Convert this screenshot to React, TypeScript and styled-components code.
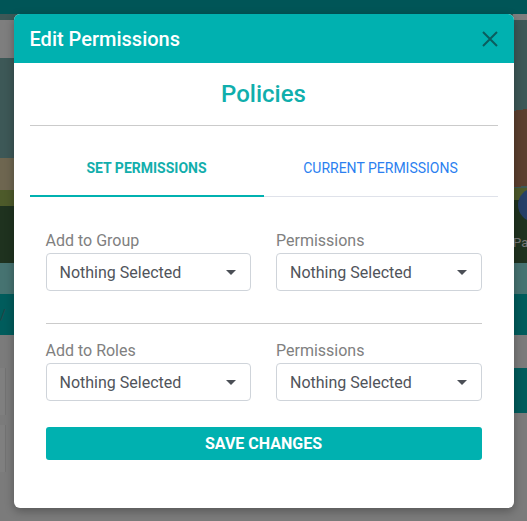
import React, { useState } from 'react'
import styled, { createGlobalStyle } from 'styled-components'

const GlobalStyle = createGlobalStyle`
  html, body, #root {
    margin: 0;
    height: 100%;
  }
  body {
    font-family: Roboto, "Liberation Sans", Arial, sans-serif;
    overflow: hidden;
  }
  * {
    box-sizing: border-box;
  }
`

const teal = '#00b1b0'

// the page that sits behind the dialog
const Page = styled.div`
  position: relative;
  width: 100%;
  height: 100vh;
  overflow: hidden;
  display: flex;
  flex-direction: column;
  background: #f6f6f6;
`

const NavBar = styled.div`
  height: 14px;
  flex: none;
  background: #00aaae;
`

const Hero = styled.div`
  height: 249px;
  flex: none;
  display: grid;
  grid-template-columns: 513px 1fr;
`

const HeroLeft = styled.div`
  background: linear-gradient(
    to bottom,
    #7ab0ae 0 6px,
    #fcfcfc 6px 44px,
    #7ab0ae 44px 144px,
    #dccca0 144px 176px,
    #9ab454 176px 192px,
    #3e643e 192px 249px
  );
`

const HeroRight = styled.div`
  display: flex;
  flex-direction: column;
  padding-top: 174px;
  overflow: hidden;
  white-space: nowrap;
  background:
    linear-gradient(172deg, transparent 0 96px, #b87e5e 96px 172px, transparent 172px),
    linear-gradient(
      to bottom,
      #fcfcfc 0 6px,
      #7ab0ae 6px 174px,
      #9ab454 174px 186px,
      #3e643e 186px 249px
    );
`

const Avatar = styled.div`
  width: 34px;
  height: 34px;
  margin-left: 5px;
  border-radius: 50%;
  background: #4a7fd0;
`

const HeroCaption = styled.span`
  margin-top: 13px;
  font-size: 13px;
  color: #f0f0f0;
`

const Band = styled.div<{ $h: number; $bg: string }>`
  height: ${(p) => p.$h}px;
  flex: none;
  background: ${(p) => p.$bg};
  display: flex;
  align-items: center;
  font-size: 14px;
  color: #4a8a8a;
`

const Content = styled.div`
  flex: 1;
  display: flex;
  justify-content: space-between;
  padding-top: 33px;
`

const CardStack = styled.div`
  display: flex;
  flex-direction: column;
  gap: 10px;
`

const Card = styled.div`
  width: 6px;
  height: 47px;
  background: #ffffff;
  border-right: 1px solid #e4e4e4;
`

const SideButton = styled.div`
  width: 13px;
  height: 45px;
  background: #00b8b8;
`

// dialog
const Backdrop = styled.div`
  position: absolute;
  inset: 0;
  background: rgba(0, 0, 0, 0.5);
  display: flex;
  justify-content: center;
  align-items: flex-start;
  padding-top: 14px;
`

const Modal = styled.div`
  width: 500px;
  background: #fff;
  border-radius: 6px;
  overflow: hidden;
  box-shadow: 0 3px 10px rgba(0, 0, 0, 0.3);
`

const ModalHeader = styled.div`
  height: 49px;
  background: ${teal};
  display: flex;
  align-items: center;
  justify-content: space-between;
  padding: 0 16px;
`

const ModalTitle = styled.h2`
  margin: 0;
  font-size: 20px;
  font-weight: 500;
  color: #fff;
`

const CloseButton = styled.button`
  border: 0;
  padding: 0;
  background: none;
  width: 16px;
  height: 16px;
  display: flex;
  cursor: pointer;
`

const ModalBody = styled.div`
  padding: 0 16px;
`

const Heading = styled.div`
  height: 63px;
  display: flex;
  align-items: center;
  justify-content: center;
  font-size: 24px;
  font-weight: 500;
  color: #10aeac;
  border-bottom: 1px solid #cbcbcb;
`

const TabList = styled.div`
  margin-top: 14px;
  display: grid;
  grid-template-columns: 1fr 1fr;
  border-bottom: 1px solid #dfe2ea;
`

const Tab = styled.button<{ $active?: boolean }>`
  height: 57px;
  padding-top: 1px;
  margin-bottom: -1px;
  border: 0;
  border-bottom: 2px solid ${(p) => (p.$active ? teal : 'transparent')};
  background: none;
  font-family: inherit;
  font-size: 14px;
  font-weight: ${(p) => (p.$active ? 700 : 400)};
  text-transform: uppercase;
  color: ${(p) => (p.$active ? '#12aeac' : '#2b7ff0')};
  cursor: pointer;
`

const Form = styled.div`
  padding: 32px 16px 48px;
`

const Row = styled.div`
  display: grid;
  grid-template-columns: 1fr 1fr;
  gap: 25px;
`

const Field = styled.label`
  display: flex;
  flex-direction: column;
`

const FieldLabel = styled.span`
  font-size: 16px;
  line-height: 24px;
  color: #808080;
`

const Select = styled.div`
  height: 38px;
  border: 1px solid #cfd4da;
  border-radius: 4px;
  padding: 0 13px;
  display: flex;
  align-items: center;
  justify-content: space-between;
  font-size: 16px;
  color: #50545b;
`

const Caret = styled.span`
  width: 0;
  height: 0;
  border-left: 5px solid transparent;
  border-right: 5px solid transparent;
  border-top: 5px solid #4b4f56;
  margin-right: 1px;
`

const Divider = styled.hr`
  margin: 32px 0 15px;
  border: 0;
  border-top: 1px solid #cbcbcb;
`

const SaveButton = styled.button`
  width: 100%;
  height: 33px;
  margin-top: 26px;
  border: 0;
  border-radius: 3px;
  background: ${teal};
  color: #fff;
  font-family: inherit;
  font-size: 16px;
  font-weight: 700;
  text-transform: uppercase;
  cursor: pointer;
`

const SelectField = ({ label }: { label: string }) => (
  <Field>
    <FieldLabel>{label}</FieldLabel>
    <Select>
      Nothing Selected
      <Caret />
    </Select>
  </Field>
)

export default function App() {
  const [tab, setTab] = useState('set')
  return (
    <>
      <GlobalStyle />
      <Page>
        <NavBar />
        <Hero>
          <HeroLeft />
          <HeroRight>
            <Avatar />
            <HeroCaption>Pa</HeroCaption>
          </HeroRight>
        </Hero>
        <Band $h={31} $bg="#8ce6e2" />
        <Band $h={41} $bg="#00b8b8">/</Band>
        <Content>
          <CardStack>
            <Card />
            <Card />
          </CardStack>
          <SideButton />
        </Content>

        <Backdrop>
          <Modal>
            <ModalHeader>
              <ModalTitle>Edit Permissions</ModalTitle>
              <CloseButton aria-label="Close">
                <svg width="16" height="16" viewBox="0 0 16 16">
                  <path d="M1 1 L15 15 M15 1 L1 15" stroke="#0b5d5e" strokeWidth="2" fill="none" />
                </svg>
              </CloseButton>
            </ModalHeader>
            <ModalBody>
              <Heading>Policies</Heading>
              <TabList>
                <Tab $active={tab === 'set'} onClick={() => setTab('set')}>Set Permissions</Tab>
                <Tab $active={tab === 'current'} onClick={() => setTab('current')}>Current Permissions</Tab>
              </TabList>
              <Form>
                <Row>
                  <SelectField label="Add to Group" />
                  <SelectField label="Permissions" />
                </Row>
                <Divider />
                <Row>
                  <SelectField label="Add to Roles" />
                  <SelectField label="Permissions" />
                </Row>
                <SaveButton>Save Changes</SaveButton>
              </Form>
            </ModalBody>
          </Modal>
        </Backdrop>
      </Page>
    </>
  )
}
